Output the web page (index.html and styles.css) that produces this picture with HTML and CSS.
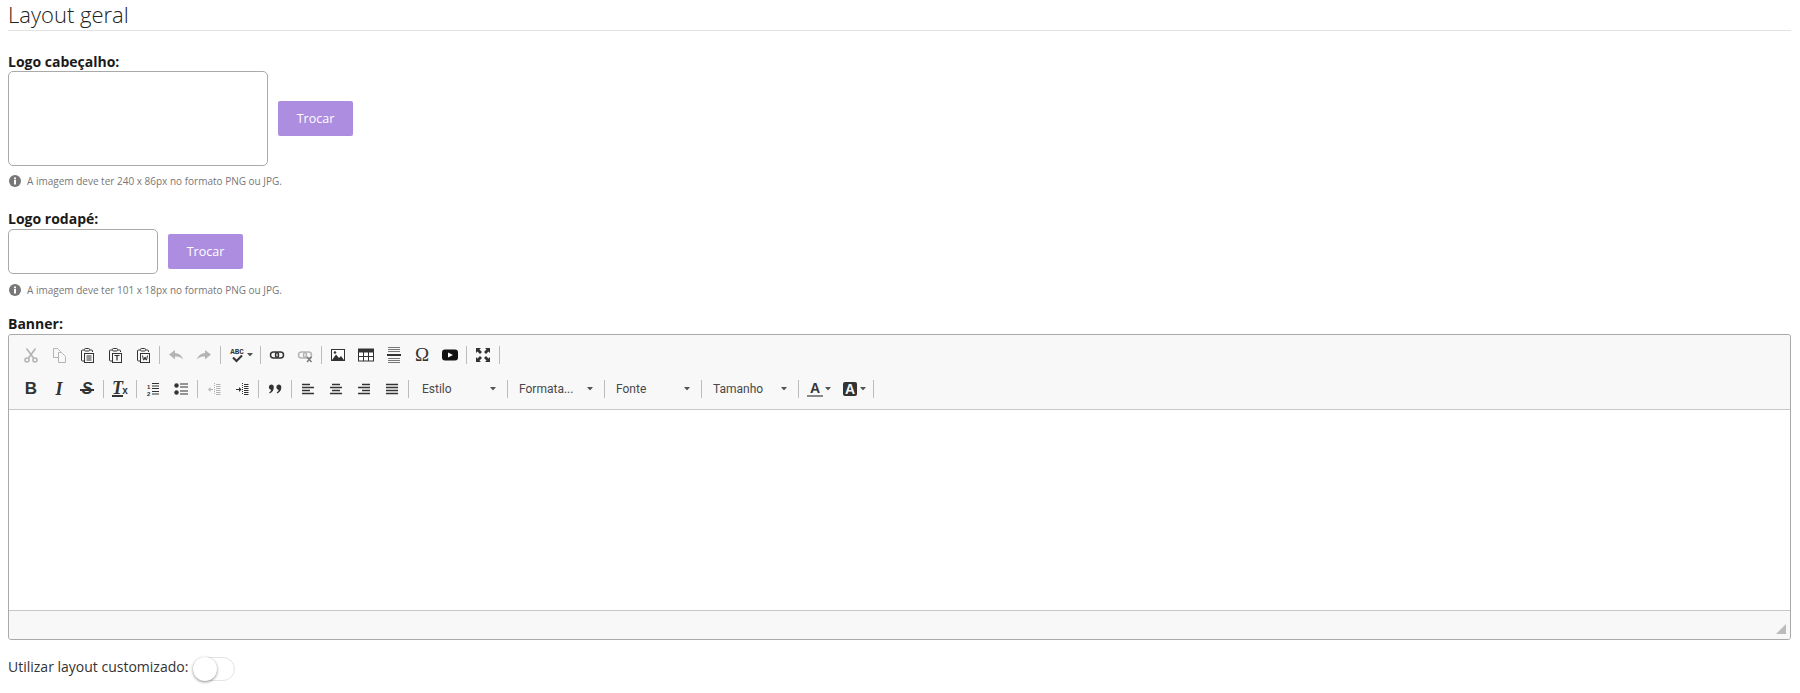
FILE: index.html
```html
<!DOCTYPE html>
<html lang="en">
<head>
    <meta charset="UTF-8">
    <title>Layout geral</title>
    <link rel="stylesheet" href="styles.css">
</head>
<body>
    <svg class="sprites" width="0" height="0">
        <symbol id="i-clip" viewBox="0 0 16 16">
            <path d="M5 3H3.500Q2.500 3 2.500 4V13Q2.500 14 3.500 14H5" fill="none" stroke="currentColor"/>
            <path d="M11 3H12.500Q13.500 3 13.500 4V5" fill="none" stroke="currentColor"/>
            <rect x="5.500" y="1.500" width="5" height="2.500" rx="1" fill="none" stroke="currentColor"/>
            <rect x="5.500" y="6.500" width="9" height="9" fill="#f8f8f8" stroke="currentColor"/>
        </symbol>
        <symbol id="i-link" viewBox="0 0 16 16">
            <rect x="1.500" y="5" width="8" height="6" rx="3" fill="none" stroke="currentColor" stroke-width="1.500"/>
            <rect x="6.500" y="5" width="8" height="6" rx="3" fill="none" stroke="currentColor" stroke-width="1.500"/>
        </symbol>
        <symbol id="i-caret" viewBox="0 0 7 4">
            <path d="M0 0H7L3.500 4Z" fill="currentColor"/>
        </symbol>
    </svg>

    <h2 class="section-title">Layout geral</h2>

    <label class="field-label first tight">Logo cabeçalho:</label>
    <div class="logo-row">
        <div class="logo-box header-logo"></div>
        <button class="swap-btn">Trocar</button>
    </div>
    <p class="hint">
        <svg class="hint-icon" viewBox="0 0 12 12"><circle cx="6" cy="6" r="6" fill="#777"/><rect x="5" y="5" width="2" height="4.500" fill="#fff"/><rect x="5" y="2.500" width="2" height="1.800" fill="#fff"/></svg>
        A imagem deve ter 240 x 86px no formato PNG ou JPG.
    </p>

    <label class="field-label first">Logo rodapé:</label>
    <div class="logo-row">
        <div class="logo-box footer-logo"></div>
        <button class="swap-btn">Trocar</button>
    </div>
    <p class="hint after-footer">
        <svg class="hint-icon" viewBox="0 0 12 12"><circle cx="6" cy="6" r="6" fill="#777"/><rect x="5" y="5" width="2" height="4.500" fill="#fff"/><rect x="5" y="2.500" width="2" height="1.800" fill="#fff"/></svg>
        A imagem deve ter 101 x 18px no formato PNG ou JPG.
    </p>

    <label class="field-label banner">Banner:</label>
    <div class="editor">
        <div class="toolbar">
            <div class="tb-row">
                <span class="tb-btn off"><svg viewBox="0 0 16 16"><g fill="none" stroke="currentColor" stroke-width="1.600"><path d="M3.500 1.500L10.500 11M12.500 1.500L5.500 11"/><circle cx="4" cy="13" r="2"/><circle cx="12" cy="13" r="2"/></g></svg></span>
                <span class="tb-btn off"><svg viewBox="0 0 16 16"><g fill="#f8f8f8" stroke="currentColor"><path d="M2.500 1.500H6.500L9.500 4.500V10.500H2.500Z"/><path d="M7.500 5.500H10.500L14.500 9.500V15.500H7.500Z"/></g></svg></span>
                <span class="tb-btn"><svg viewBox="0 0 16 16"><use href="#i-clip"/><path d="M7.500 9H12.500M7.500 11H12.500M7.500 13H12.500" stroke="currentColor"/></svg></span>
                <span class="tb-btn"><svg viewBox="0 0 16 16"><use href="#i-clip"/><path d="M7.500 8.500H12.500M10 8.500V13.500" stroke="currentColor" stroke-width="1.200"/></svg></span>
                <span class="tb-btn"><svg viewBox="0 0 16 16"><use href="#i-clip"/><path d="M7.500 8.500L8.500 13H9L10 10L11 13H11.500L12.500 8.500" fill="none" stroke="currentColor"/></svg></span>
                <span class="tb-sep"></span>
                <span class="tb-btn off"><svg viewBox="0 0 16 16"><path d="M1 7.500L7 3V6Q13 6 15 12.500Q12 9 7 9.500V12.500Z" fill="currentColor"/></svg></span>
                <span class="tb-btn off"><svg viewBox="0 0 16 16"><path d="M15 7.500L9 3V6Q3 6 1 12.500Q4 9 9 9.500V12.500Z" fill="currentColor"/></svg></span>
                <span class="tb-sep"></span>
                <span class="tb-btn wide">
                    <svg viewBox="0 0 16 16"><text x="1.250" y="7" class="abc">ABC</text><path d="M4 10.500L7.500 14L13 8.500" fill="none" stroke="currentColor" stroke-width="2"/></svg>
                    <svg class="caret" viewBox="0 0 7 4"><use href="#i-caret"/></svg>
                </span>
                <span class="tb-sep"></span>
                <span class="tb-btn"><svg viewBox="0 0 16 16"><use href="#i-link"/></svg></span>
                <span class="tb-btn off"><svg viewBox="0 0 16 16"><use href="#i-link"/><path d="M10 10L14.500 15M14.500 10L10 15" stroke="#777" stroke-width="1.400"/></svg></span>
                <span class="tb-sep"></span>
                <span class="tb-btn"><svg viewBox="0 0 16 16"><rect x="1.500" y="2.500" width="13" height="11" fill="#fff" stroke="currentColor"/><path d="M2 13L6 7.500L9 11L11 9L14 13Z" fill="currentColor"/><circle cx="5" cy="5.500" r="1.300" fill="currentColor"/></svg></span>
                <span class="tb-btn"><svg viewBox="0 0 16 16"><rect x="0.500" y="2" width="15" height="12" fill="#fff" stroke="currentColor"/><rect x="0.500" y="2" width="15" height="3.500" fill="currentColor"/><path d="M0.500 9.500H15.500M5.500 5V14M10.500 5V14" stroke="currentColor"/></svg></span>
                <span class="tb-btn"><svg viewBox="0 0 16 16"><path d="M2 0.500H14M2 2.500H14M2 4.500H14M2 11.500H14M2 13.500H14M2 15.500H14" stroke="#777"/><rect x="1" y="7" width="14" height="2" fill="currentColor"/></svg></span>
                <span class="tb-btn"><span class="glyph omega">Ω</span></span>
                <span class="tb-btn"><svg viewBox="0 0 16 16"><rect x="0" y="2.500" width="16" height="11" rx="3" fill="#111"/><path d="M6 5.500L11 8L6 10.500Z" fill="#fff"/></svg></span>
                <span class="tb-sep"></span>
                <span class="tb-btn"><svg viewBox="0 0 16 16"><path d="M1 1H6L4.500 2.500L7 5L5 7L2.500 4.500L1 6ZM15 1V6L13.500 4.500L11 7L9 5L11.500 2.500L10 1ZM1 15V10L2.500 11.500L5 9L7 11L4.500 13.500L6 15ZM15 15H10L11.500 13.500L9 11L11 9L13.500 11.500L15 10Z" fill="currentColor"/></svg></span>
                <span class="tb-sep"></span>
            </div>
            <div class="tb-row">
                <span class="tb-btn"><span class="glyph bold">B</span></span>
                <span class="tb-btn"><span class="glyph italic">I</span></span>
                <span class="tb-btn"><span class="glyph strike">S</span></span>
                <span class="tb-sep"></span>
                <span class="tb-btn clear-fmt"><span class="glyph italic">T</span><span class="glyph sub">x</span></span>
                <span class="tb-sep"></span>
                <span class="tb-btn"><svg viewBox="0 0 16 16"><text x="2" y="7.500" class="mini">1</text><text x="2" y="14.500" class="mini">2</text><path d="M7 2.500H14M7 5H14M7 7.500H14M7 10.500H14M7 13H14" stroke="currentColor"/></svg></span>
                <span class="tb-btn"><svg viewBox="0 0 16 16"><circle cx="3.500" cy="4.500" r="2.200" fill="currentColor"/><circle cx="3.500" cy="11.500" r="2.200" fill="currentColor"/><path d="M7 3H15M7 6H15M7 10H15M7 13H15" stroke="currentColor" stroke-width="1.100"/></svg></span>
                <span class="tb-sep"></span>
                <span class="tb-btn off"><svg viewBox="0 0 16 16"><path d="M8.500 2V14" stroke="currentColor" stroke-dasharray="1 1"/><path d="M10 3.500H14.500M10 5.500H14.500M10 7.500H14.500M10 9.500H14.500M10 11.500H14.500M10 13.500H14.500M4 8.500H7" stroke="currentColor"/><path d="M2 8.500L4.500 6V11Z" fill="currentColor"/></svg></span>
                <span class="tb-btn"><svg viewBox="0 0 16 16"><path d="M8.500 2V14" stroke="currentColor" stroke-dasharray="1 1"/><path d="M10 3.500H14.500M10 5.500H14.500M10 7.500H14.500M10 9.500H14.500M10 11.500H14.500M10 13.500H14.500M2 8.500H5" stroke="currentColor"/><path d="M7.500 8.500L5 6V11Z" fill="currentColor"/></svg></span>
                <span class="tb-sep"></span>
                <span class="tb-btn"><svg viewBox="0 0 16 16"><path d="M4 3.500A2.800 2.800 0 0 1 6.800 6.300Q6.800 10.500 2.800 12.500L2.200 11.500Q4 10.300 4.200 9A2.800 2.800 0 0 1 4 3.500ZM11.500 3.500A2.800 2.800 0 0 1 14.300 6.300Q14.300 10.500 10.300 12.500L9.700 11.500Q11.500 10.300 11.700 9A2.800 2.800 0 0 1 11.500 3.500Z" fill="currentColor"/></svg></span>
                <span class="tb-sep"></span>
                <span class="tb-btn"><svg viewBox="0 0 16 16"><path d="M2 3.500H10M2 6.500H14M2 9.500H10M2 12.500H14" stroke="currentColor" stroke-width="1.700"/></svg></span>
                <span class="tb-btn"><svg viewBox="0 0 16 16"><path d="M4 3.500H12M2 6.500H14M4 9.500H12M2 12.500H14" stroke="currentColor" stroke-width="1.700"/></svg></span>
                <span class="tb-btn"><svg viewBox="0 0 16 16"><path d="M6 3.500H14M2 6.500H14M6 9.500H14M2 12.500H14" stroke="currentColor" stroke-width="1.700"/></svg></span>
                <span class="tb-btn"><svg viewBox="0 0 16 16"><path d="M2 3.500H14M2 6.500H14M2 9.500H14M2 12.500H14" stroke="currentColor" stroke-width="1.700"/></svg></span>
                <span class="tb-sep"></span>
                <span class="tb-combo first-combo">Estilo<svg class="caret" viewBox="0 0 7 4"><use href="#i-caret"/></svg></span>
                <span class="tb-sep"></span>
                <span class="tb-combo">Formata...<svg class="caret" viewBox="0 0 7 4"><use href="#i-caret"/></svg></span>
                <span class="tb-sep"></span>
                <span class="tb-combo">Fonte<svg class="caret" viewBox="0 0 7 4"><use href="#i-caret"/></svg></span>
                <span class="tb-sep"></span>
                <span class="tb-combo">Tamanho<svg class="caret" viewBox="0 0 7 4"><use href="#i-caret"/></svg></span>
                <span class="tb-sep"></span>
                <span class="tb-btn wide color-btn">
                    <span class="color-a">A</span>
                    <svg class="caret" viewBox="0 0 7 4"><use href="#i-caret"/></svg>
                </span>
                <span class="tb-btn wide color-btn">
                    <span class="color-bg">A</span>
                    <svg class="caret" viewBox="0 0 7 4"><use href="#i-caret"/></svg>
                </span>
                <span class="tb-sep"></span>
            </div>
        </div>
        <div class="editor-body"></div>
        <div class="editor-foot"><span class="resizer"></span></div>
    </div>

    <div class="toggle-row">
        <span class="toggle-text">Utilizar layout customizado:</span>
        <span class="toggle"><span class="knob"></span></span>
    </div>
</body>
</html>
```

FILE: styles.css
```css
html, body {
    height: 100%;
    overflow: hidden;
}
body {
    margin: 0;
    padding: 0 9px 0 8px;
    background: #fff;
    font-family: "Open Sans", sans-serif;
    font-size: 14px;
    color: #212529;
}
.sprites {
    position: absolute;
}
.section-title {
    margin: 0;
    height: 30px;
    line-height: 28px;
    font-size: 22px;
    font-weight: 300;
    color: #222;
    border-bottom: 1px solid #e3e3e3;
}
.field-label {
    display: block;
    height: 20px;
    line-height: 20px;
    font-weight: 700;
    color: #1a1a1a;
}
.field-label.first {
    margin-top: 20px;
}
.field-label.tight {
    margin-top: 21px;
    height: 19px;
}
.field-label.banner {
    margin-top: 16px;
}
.logo-row {
    display: flex;
    align-items: center;
    gap: 10px;
}
.logo-box {
    box-sizing: border-box;
    border: 1px solid #aaa;
    border-radius: 5px;
    background: #fff;
}
.header-logo {
    width: 260px;
    height: 95px;
}
.footer-logo {
    width: 150px;
    height: 45px;
}
.swap-btn {
    width: 75px;
    height: 35px;
    padding: 0;
    border: none;
    border-radius: 2px;
    background: #ad8ddf;
    color: #fff;
    font-family: "Open Sans", sans-serif;
    font-size: 12.5px;
}
.hint {
    display: flex;
    align-items: center;
    gap: 6px;
    height: 16px;
    margin: 7px 0 0;
    font-size: 10px;
    color: #777;
}
.hint.after-footer {
    margin-top: 8px;
}
.hint-icon {
    width: 12px;
    height: 12px;
    margin-left: 1px;
}
.editor {
    box-sizing: border-box;
    height: 306px;
    display: flex;
    flex-direction: column;
    border: 1px solid #a9a9a9;
    border-radius: 3px;
    color: #333;
}
.toolbar {
    padding: 6px 0 6px 8px;
    background: #f8f8f8;
    border-bottom: 1px solid #c8c8c8;
    border-radius: 3px 3px 0 0;
}
.tb-row {
    display: flex;
    align-items: center;
    height: 28px;
}
.tb-row + .tb-row {
    margin-top: 6px;
}
.tb-btn {
    flex: none;
    width: 28px;
    height: 28px;
    display: flex;
    align-items: center;
    padding-left: 6px;
    box-sizing: border-box;
    color: #333;
}
.tb-btn svg {
    width: 16px;
    height: 16px;
    overflow: visible;
}
.tb-btn.wide {
    width: 35px;
}
.tb-btn.off {
    color: #b4b4b4;
}
.tb-btn svg.caret, .tb-combo svg.caret {
    width: 6px;
    height: 3.500px;
    color: #555;
}
.tb-btn svg.caret {
    margin-left: 2px;
}
.tb-sep {
    flex: none;
    width: 1px;
    height: 18px;
    margin: 0 2px;
    background: #bcbcbc;
}
.tb-combo {
    flex: none;
    width: 92px;
    height: 28px;
    box-sizing: border-box;
    display: flex;
    align-items: center;
    justify-content: space-between;
    padding: 0 9px 0 9px;
    font-family: "Roboto", sans-serif;
    font-size: 12px;
    color: #484848;
}
.first-combo {
    width: 94px;
    padding-left: 11px;
}
.mini {
    font-family: "Liberation Sans", sans-serif;
    font-size: 6px;
    font-weight: 700;
    fill: currentColor;
}
.abc {
    font-family: "Liberation Mono", monospace;
    font-size: 7.5px;
    font-weight: 700;
    fill: currentColor;
}
.glyph {
    display: block;
    width: 16px;
    text-align: center;
    line-height: 16px;
}
.bold {
    font-family: "Liberation Sans", sans-serif;
    font-weight: 700;
    font-size: 17px;
}
.italic {
    font-family: "Liberation Serif", serif;
    font-style: italic;
    font-weight: 700;
    font-size: 18px;
}
.strike {
    position: relative;
    font-family: "Liberation Sans", sans-serif;
    font-style: italic;
    font-weight: 700;
    font-size: 16px;
}
.strike::after {
    content: "";
    position: absolute;
    left: 1px;
    right: 1px;
    top: 8px;
    height: 2px;
    background: #333;
}
.omega {
    font-family: "Liberation Serif", serif;
    font-size: 19px;
}
.clear-fmt .italic {
    width: 11px;
    border-bottom: 2px solid #333;
    line-height: 14px;
}
.clear-fmt .sub {
    width: 6px;
    font-family: "Liberation Sans", sans-serif;
    font-size: 10px;
    font-weight: 700;
    line-height: 10px;
    align-self: flex-end;
    margin: 0 0 7px -1px;
}
.color-a {
    width: 16px;
    text-align: center;
    font-family: "Liberation Sans", sans-serif;
    font-weight: 700;
    font-size: 14px;
    line-height: 14px;
    border-bottom: 2px solid #888;
}
.color-bg {
    width: 14px;
    margin: 0 1px;
    text-align: center;
    background: #333;
    color: #f8f8f8;
    border-radius: 2px;
    font-family: "Liberation Sans", sans-serif;
    font-weight: 700;
    font-size: 14px;
    line-height: 14px;
}
.editor-body {
    flex: 1;
    background: #fff;
}
.editor-foot {
    box-sizing: border-box;
    position: relative;
    height: 29px;
    background: #f8f8f8;
    border-top: 1px solid #c8c8c8;
    border-radius: 0 0 3px 3px;
}
.resizer {
    position: absolute;
    right: 4px;
    bottom: 5px;
    width: 10px;
    height: 10px;
    background: #bbb;
    clip-path: polygon(100% 0, 100% 100%, 0 100%);
}
.toggle-row {
    display: flex;
    align-items: center;
    gap: 4px;
    margin-top: 16px;
    height: 25px;
    font-size: 14px;
    color: #333;
}
.toggle-text {
    margin-bottom: 5px;
}
.toggle {
    box-sizing: border-box;
    position: relative;
    width: 42px;
    height: 24px;
    margin-left: 1px;
    border: 1px solid #e4e4e4;
    border-radius: 12px;
    background: #fff;
}
.knob {
    position: absolute;
    left: -1px;
    top: -1px;
    width: 24px;
    height: 24px;
    box-sizing: border-box;
    border-radius: 50%;
    background: #fff;
    box-shadow: 0 1px 3px rgba(0,0,0,0.45);
}
```
